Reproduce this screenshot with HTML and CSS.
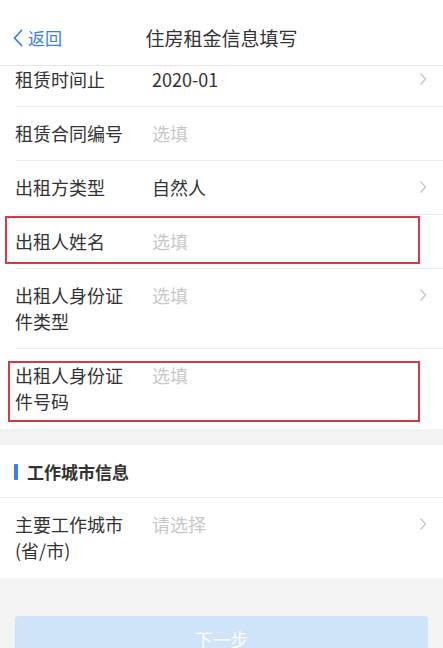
FILE: index.html
```html
<!DOCTYPE html>
<html lang="zh-CN">
<head>
  <meta charset="UTF-8" />
  <meta name="viewport" content="width=device-width, initial-scale=1.0"/>
  <title>住房租金信息填写</title>
  <link rel="stylesheet" href="styles.css">
</head>
<body>
  <div class="page">
    <div class="nav-bar">
      <div class="back">
        <svg class="back-icon" viewBox="0 0 10 18" width="10" height="18">
          <polyline points="8.5,1.5 1.5,9 8.5,16.5" fill="none" stroke="#3b7fe0" stroke-width="1.8" stroke-linecap="round" stroke-linejoin="round"/>
        </svg>
        <span>返回</span>
      </div>
      <div class="nav-title">住房租金信息填写</div>
    </div>

    <div class="content">
      <!-- 租赁信息 -->
      <div class="group">
        <div class="row">
          <div class="label">租赁时间止</div>
          <div class="value">2020-01</div>
          <svg class="arrow" viewBox="0 0 8 14" width="8" height="14"><polyline points="1.5,1.5 6.5,7 1.5,12.5" fill="none" stroke="#c9c9ce" stroke-width="1.5"/></svg>
        </div>
        <div class="row">
          <div class="label">租赁合同编号</div>
          <div class="value placeholder">选填</div>
        </div>
        <div class="row">
          <div class="label">出租方类型</div>
          <div class="value">自然人</div>
          <svg class="arrow" viewBox="0 0 8 14" width="8" height="14"><polyline points="1.5,1.5 6.5,7 1.5,12.5" fill="none" stroke="#c9c9ce" stroke-width="1.5"/></svg>
        </div>
        <div class="row">
          <div class="label">出租人姓名</div>
          <div class="value placeholder">选填</div>
          <div class="mark mark-1"></div>
        </div>
        <div class="row">
          <div class="label">出租人身份证件类型</div>
          <div class="value placeholder">选填</div>
          <svg class="arrow" viewBox="0 0 8 14" width="8" height="14"><polyline points="1.5,1.5 6.5,7 1.5,12.5" fill="none" stroke="#c9c9ce" stroke-width="1.5"/></svg>
        </div>
        <div class="row">
          <div class="label">出租人身份证件号码</div>
          <div class="value placeholder">选填</div>
          <div class="mark mark-2"></div>
        </div>
      </div>

      <!-- 工作城市信息 -->
      <div class="group">
        <div class="section-title">
          <span class="bar"></span>
          <span>工作城市信息</span>
        </div>
        <div class="row">
          <div class="label">主要工作城市(省/市)</div>
          <div class="value placeholder">请选择</div>
          <svg class="arrow" viewBox="0 0 8 14" width="8" height="14"><polyline points="1.5,1.5 6.5,7 1.5,12.5" fill="none" stroke="#c9c9ce" stroke-width="1.5"/></svg>
        </div>
      </div>

      <div class="footer">
        <button class="next-btn">下一步</button>
      </div>
    </div>
  </div>
</body>
</html>
```

FILE: styles.css
```css
* {
  margin: 0;
  padding: 0;
  box-sizing: border-box;
}

body {
  font-family: 'Noto Sans CJK SC', 'Noto Sans', sans-serif;
  background: #f4f4f4;
  color: #333;
  width: 443px;
  height: 648px;
  overflow: hidden;
}

.page {
  display: flex;
  flex-direction: column;
}

/* 顶部导航 */
.nav-bar {
  position: relative;
  z-index: 2;
  height: 66px;
  background: #fff;
  border-bottom: 1px solid #e6e6e6;
  display: flex;
  align-items: center;
  padding-top: 10px;
}

.back {
  display: flex;
  align-items: center;
  gap: 5px;
  padding-left: 13px;
  color: #3b7fe0;
  font-size: 17px;
  line-height: 20px;
}

.nav-title {
  position: absolute;
  left: 0;
  right: 0;
  top: 9px;
  bottom: 0;
  display: flex;
  align-items: center;
  justify-content: center;
  font-size: 19px;
  color: #333;
  pointer-events: none;
}

/* 列表已向上滚动了一点 */
.content {
  margin-top: -13px;
}

.group {
  background: #fff;
  margin-bottom: 16px;
}

.row {
  position: relative;
  display: flex;
  align-items: flex-start;
  padding: 13px 15px 15px 15px;
  font-size: 18px;
  line-height: 26px;
}

.row::after {
  content: '';
  position: absolute;
  left: 16px;
  right: 0;
  bottom: 0;
  border-bottom: 1px solid #ececec;
}

.group .row:last-child::after {
  display: none;
}

.label {
  width: 120px;
  margin-right: 17px;
  color: #333;
  flex-shrink: 0;
}

.value {
  flex: 1;
  color: #333;
}

.placeholder {
  color: #c8c8c8;
}

.arrow {
  margin-top: 6px;
  margin-right: 1px;
}

/* 红色标注框 */
.mark {
  position: absolute;
  left: 5px;
  right: 23px;
  border: 2.5px solid #d83a44;
  pointer-events: none;
}

.mark-1 {
  top: 1px;
  height: 48px;
}

.mark-2 {
  left: 8px;
  top: 12px;
  height: 61px;
}

.section-title {
  position: relative;
  display: flex;
  align-items: center;
  gap: 9px;
  height: 53px;
  padding-left: 14px;
  font-size: 17px;
  font-weight: bold;
  color: #333;
  border-bottom: 1px solid #ececec;
}

.bar {
  width: 4px;
  height: 16px;
  background: #3d7ee8;
  border-radius: 1px;
  margin-top: 2px;
}

.footer {
  padding: 22px 15px 0 15px;
}

.next-btn {
  width: 100%;
  height: 46px;
  border: none;
  border-radius: 4px;
  background: #d0e4f9;
  color: #fff;
  font-family: inherit;
  font-size: 18px;
}
```
